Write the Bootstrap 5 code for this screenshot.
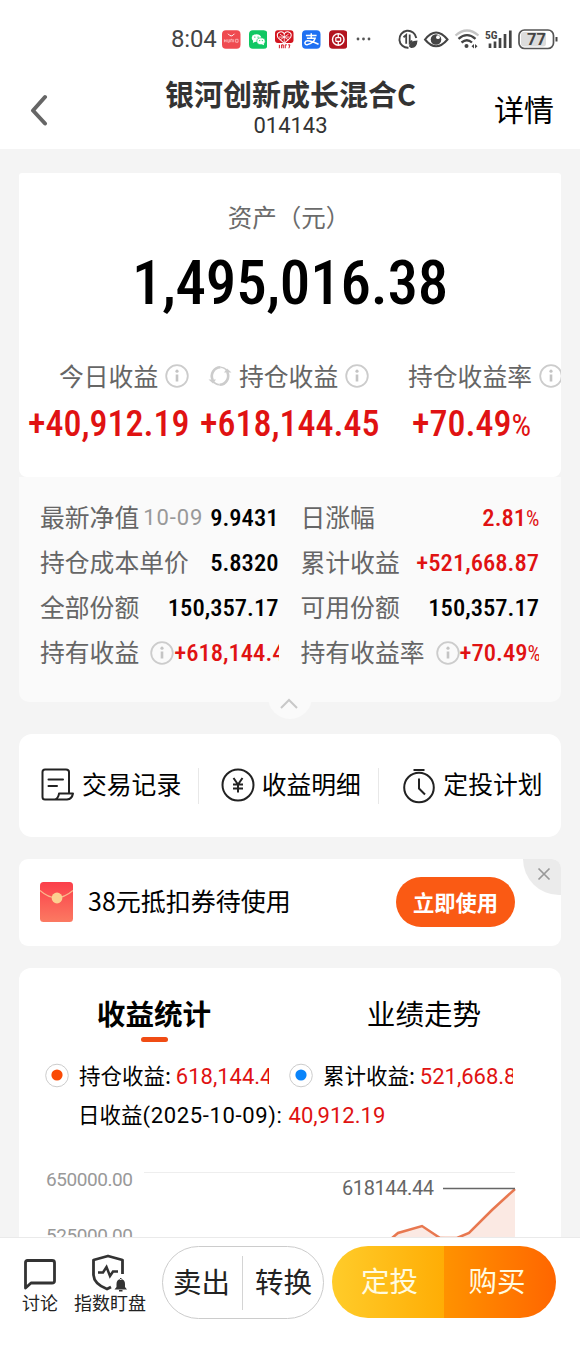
<!DOCTYPE html>
<html lang="zh-CN">
<head>
<meta charset="utf-8">
<meta name="viewport" content="width=device-width, initial-scale=1">
<title>银河创新成长混合C</title>
<link href="https://cdn.jsdelivr.net/npm/bootstrap@5.3.0/dist/css/bootstrap.min.css" rel="stylesheet">
<style>
body{font-family:"Noto Sans CJK SC",sans-serif;color:#000;background:#f4f4f4}
.screen{width:580px;height:1350px}
.lh1{line-height:1}
.num{font-family:"Roboto Condensed",Roboto,sans-serif;font-weight:500}
.rob{font-family:Roboto,"Noto Sans CJK SC",sans-serif}
.up{color:#e01212}
.pct{font-size:.86em;font-weight:400;letter-spacing:-.5px}
svg{display:block;flex:none}
.statusbar{height:60px;padding:18px 22px 0 171px}
.clock{font-size:24px;color:#444;width:51px;font-weight:400;line-height:44px;letter-spacing:-.2px}
.apps{gap:8.2px}
.topnav{height:89px;padding:0 26px 0 30px}
.fund-name{font-size:29px;font-weight:700;color:#333;line-height:32px;margin:17px 3px 0 0}
.fund-code{font-size:22px;color:#333;line-height:24px;margin:5px 3px 0 0}
.detail-link{font-size:30px}
.page{padding:24px 19px 0}
.asset{height:304px;border-radius:3px 3px 8px 8px}
.asset-title{font-size:24.5px;color:#6b6b6b;padding:31px 2px 0 0;line-height:26px}
.asset-total{font-size:61px;line-height:60px;margin-top:23px;letter-spacing:-.2px}
.metric-label{font-size:24.8px;line-height:30px;color:#666}
.metric-label svg{position:relative;top:1px}
.metric-value{font-size:36px;line-height:40px;margin-top:14px}
.details{height:225px;background:#fafafa;border-radius:0 0 10px 10px;padding:18px 22px 0 21px}
.drow{height:45px}
.dcell{width:238.5px;font-size:24.8px;color:#666}
.dcell>span:first-child{padding-bottom:2.5px}
.dcell .num{font-size:24.6px;color:#000;padding-top:2px}
.dcell .num.up{color:#e01212}
.nav-date{font-size:22px;color:#999;letter-spacing:.9px;margin-left:4px}
.tab-up{width:44px;height:44px;left:249px;bottom:-17px;background:#fafafa}
.panel-gap{margin-top:32px}
.links{height:103px;border-radius:13px;font-size:24.8px}
.links .item{width:181px;padding-left:22px;gap:7px}
.links span{padding-bottom:4px}
.vline{width:1px;background:#e8e8e8}
.coupon{height:87px;border-radius:9px;margin-top:22px;padding:0 46px 0 21px}
.coupon-text{font-size:25px;margin-left:15px;padding-bottom:4px}
.use-btn{width:119px;height:50px;background:#fa5a14;font-size:21.3px;font-weight:700;color:#fff;margin-bottom:2px}
.corner{width:38px;height:36px;right:0;top:0;background:#ebebeb;border-bottom-left-radius:36px;border-top-right-radius:9px}
.stats{height:420px;border-radius:12px;margin-top:22px}
.stats .tabs{font-size:28.6px;height:69px;padding:31px 2px 0 0}
.legend-row{height:39px;font-size:21.5px}
.legend-row .rob{font-size:22px}
.clip-l{width:189.5px}
.bottombar{height:113px;border-top:1px solid #eaeaea;padding:8px 23px 0 22px}
.mini{font-size:18px;color:#222}
.pill{height:73px;font-size:28.5px}
.pill-out{width:162px;border:1px solid #ccc;color:#222;margin-left:16px;padding:0 11px 0 10px}
.pill-out span{padding-bottom:3px}
.pill-main{width:224px;margin-left:8px;color:#fffbe0;height:72px}
.buy-l{background:linear-gradient(90deg,#ffcc2a,#ffad05);padding-left:3px}
.buy-r{background:linear-gradient(90deg,#ff9200,#ff6600);padding-right:6px}
</style>
</head>
<body>
<svg width="0" height="0" class="position-absolute">
  <symbol id="info" viewBox="0 0 24 24"><circle cx="12" cy="12" r="10.800" fill="none" stroke="#ccc" stroke-width="1.800"/><path d="M12 10.500V17.500" stroke="#c4c4c4" stroke-width="2.600"/><circle cx="12" cy="7.200" r="1.600" fill="#c4c4c4"/></symbol>
</svg>
<div class="screen d-flex flex-column overflow-hidden">
  <header class="bg-white">
    <div class="statusbar d-flex align-items-center">
      <span class="clock rob">8:04</span>
      <div class="apps d-flex align-items-center">
        <svg width="18.500" height="19" viewBox="0 0 19 19"><rect width="19" height="19" rx="4" fill="#ef4a50"/><path d="M6.200 3.600q3.300 4.400 6.600 0" fill="none" stroke="#fff" stroke-width="1"/><path d="M2.500 9.300v3M4.300 9.300v3M2.500 10.800h1.800M6 9.300v3h1.500v-3M9 12.300v-3h1.500v3M12 9.300v3M14 9.300v3h2.500v-3z" stroke="#ffd5d5" stroke-width=".7" fill="none"/></svg>
        <svg width="18.500" height="19" viewBox="0 0 19 19"><rect width="19" height="19" rx="4" fill="#10c763"/><ellipse cx="7.700" cy="8" rx="4.900" ry="4" fill="#fff"/><path d="M4.500 10l-.6 3 3-1.400z" fill="#fff"/><ellipse cx="12.300" cy="11.300" rx="4.300" ry="3.500" fill="#fff" stroke="#10c763" stroke-width=".7"/><path d="M13 14l2.500 1.400-.4-2z" fill="#fff"/><g fill="#10c763"><circle cx="6" cy="7" r=".7"/><circle cx="9.300" cy="7" r=".7"/><circle cx="11" cy="10.600" r=".6"/><circle cx="13.700" cy="10.600" r=".6"/></g></svg>
        <svg width="18.500" height="19" viewBox="0 0 19 19"><rect y="0" width="19" height="13" rx="3" fill="#d3141f"/><path d="M9.500 13.500L3 7.500Q1 3 5 1.800 8 1 9.500 3.500 11 1 14 1.800 18 3 16 7.500z" fill="#d3141f" stroke="#fff" stroke-width="1.100"/><path d="M5 4l9 6M14 4l-9 6M9.500 3.500v9M4 7h11" stroke="#fff" stroke-width=".8"/><path d="M4.500 15v3.500M6.800 18.500V15h1.700v3.500M10.500 18.500V15h1.700M13.500 15h1.800l-1 3.500" stroke="#d3141f" stroke-width="1" fill="none"/></svg>
        <svg width="18.500" height="19" viewBox="0 0 19 19"><rect width="19" height="19" rx="4" fill="#1f70f2"/><path d="M4 5.400h11M9.500 3v5M5 8.200h8.500Q12 13 5.500 14.800 2.800 15 3 12.600 4 10 8 11q4 1 9 3.400" fill="none" stroke="#fff" stroke-width="1.500"/></svg>
        <svg width="18.500" height="19" viewBox="0 0 19 19"><rect width="19" height="19" rx="4" fill="#b3141f"/><circle cx="9.500" cy="9.500" r="5.900" fill="none" stroke="#fff" stroke-width="1.500"/><rect x="7" y="7.500" width="5" height="4" rx=".8" fill="none" stroke="#fff" stroke-width="1.300"/><path d="M9.500 3.800v3.700M9.500 11.500v3.700" stroke="#fff" stroke-width="1.300"/></svg>
        <svg width="17" height="6" viewBox="0 0 17 6" fill="#555"><circle cx="3" cy="3" r="1.400"/><circle cx="8.500" cy="3" r="1.400"/><circle cx="14" cy="3" r="1.400"/></svg>
      </div>
      <div class="d-flex align-items-center ms-auto">
        <svg width="160" height="24" viewBox="398 27 160 24" fill="none" stroke="#444">
          <path d="M416.300 38A8.500 8.500 0 1 0 408.500 47.700" stroke-width="1.900"/><path d="M403.500 37.300l2.700-2.300v8.800M409.700 34.500V43l2.600-2.300" stroke-width="1.800"/><path d="M409 46.500q0-5.500 8.500-6-.5 8-6.500 7.500z" fill="#444" stroke="none"/>
          <path d="M425 39.500Q436 25.500 447.500 39.500 436 53 425 39.500z" stroke-width="2"/><circle cx="436" cy="39.500" r="5.300" fill="#444" stroke="none"/><circle cx="438" cy="37.200" r="1.900" fill="#fff" stroke="none"/>
          <path d="M455.500 35.500Q467 25.500 478.500 35.500" stroke="#c4c4c4" stroke-width="2.200"/><path d="M458.500 38.800Q467 31.500 475.500 38.800M461.500 42.500Q467 38 472 42.500" stroke-width="2.300"/><circle cx="466.500" cy="46" r="2" fill="#444" stroke="none"/><path d="M471.500 46.200l2.500-2.200v4.400zM477.500 46.200L475 44v4.400z" fill="#444" stroke="none"/>
          <path d="M490 43.500V48M495 41.500V48M500 38V48M505 34V48M510.300 30.500V48" stroke-width="2.700"/>
          <text x="485" y="38.500" font-size="11.500" font-weight="700" font-family="Roboto Condensed" fill="#444" stroke="none">5G</text>
          <rect x="519" y="30" width="34.500" height="18.500" rx="5.500" stroke="#555" stroke-width="1.700"/><rect x="521" y="32" width="25" height="14.500" rx="3" fill="#dcdcdc" stroke="none"/><path d="M556.500 37v4.500" stroke-width="2"/>
          <text x="527" y="45" font-size="16.500" font-weight="700" font-family="Roboto" fill="#444" stroke="none">77</text>
        </svg>
      </div>
    </div>
    <div class="topnav d-flex align-items-start justify-content-between">
      <svg width="60" height="32" viewBox="0 0 60 32" style="margin-top:34px"><path d="M15 3L3 16.500 15 29.500" fill="none" stroke="#666" stroke-width="4" stroke-linecap="round" stroke-linejoin="round"/></svg>
      <div class="text-center">
        <div class="fund-name">银河创新成长混合C</div>
        <div class="fund-code rob">014143</div>
      </div>
      <div class="detail-link" style="line-height:97px">详情</div>
    </div>
  </header>

  <main class="page flex-grow-1 overflow-hidden">
    <section class="position-relative">
      <div class="asset bg-white overflow-hidden">
        <div class="asset-title text-center">资产（元）</div>
        <div class="asset-total num text-center">1,495,016.38</div>
        <div class="d-flex flex-nowrap" style="margin-top:47px">
          <div style="width:181px;padding-left:9px;flex:none">
            <div class="metric-label d-flex align-items-center" style="padding-left:31px">今日收益<svg width="24" height="24" style="margin-left:7px"><use href="#info"/></svg></div>
            <div class="metric-value num up">+40,912.19</div>
          </div>
          <div style="width:212px;flex:none">
            <div class="metric-label d-flex align-items-center" style="padding-left:7px"><svg width="26" height="24" viewBox="0 0 26 24" fill="none" stroke="#ccc" stroke-width="2.600"><path d="M5.800 16A8.800 8.800 0 0 1 13.500 3.200M20.200 8A8.800 8.800 0 0 1 12.500 20.800"/><path d="M13.500 3.200Q18 3.500 20.500 7.500M12.500 20.800Q8 20.500 5.500 16.500" stroke-width="1.600"/><path d="M1.500 15.500h7.500l-3 4zM24.500 8.500H17l3-4z" fill="#ccc" stroke="none"/></svg><span style="margin-left:6px">持仓收益</span><svg width="24" height="24" style="margin-left:7px"><use href="#info"/></svg></div>
            <div class="metric-value num up">+618,144.45</div>
          </div>
          <div style="flex:none">
            <div class="metric-label d-flex align-items-center" style="margin-left:-4px">持仓收益率<svg width="24" height="24" style="margin-left:7px"><use href="#info"/></svg></div>
            <div class="metric-value num up">+70.49<span class="pct">%</span></div>
          </div>
        </div>
      </div>
      <div class="details">
        <div class="drow d-flex justify-content-between">
          <div class="dcell d-flex align-items-center"><span>最新净值</span><span class="nav-date rob">10-09</span><span class="num ms-auto">9.9431</span></div>
          <div class="dcell d-flex align-items-center"><span>日涨幅</span><span class="num up ms-auto">2.81<span class="pct">%</span></span></div>
        </div>
        <div class="drow d-flex justify-content-between">
          <div class="dcell d-flex align-items-center"><span>持仓成本单价</span><span class="num ms-auto">5.8320</span></div>
          <div class="dcell d-flex align-items-center"><span>累计收益</span><span class="num up ms-auto">+521,668.87</span></div>
        </div>
        <div class="drow d-flex justify-content-between">
          <div class="dcell d-flex align-items-center"><span>全部份额</span><span class="num ms-auto">150,357.17</span></div>
          <div class="dcell d-flex align-items-center"><span>可用份额</span><span class="num ms-auto">150,357.17</span></div>
        </div>
        <div class="drow d-flex justify-content-between">
          <div class="dcell d-flex align-items-center overflow-hidden text-nowrap"><span>持有收益</span><svg width="24" height="24" style="margin-left:11px"><use href="#info"/></svg><span class="num up">+618,144.45</span></div>
          <div class="dcell d-flex align-items-center overflow-hidden text-nowrap"><span>持有收益率</span><svg width="24" height="24" style="margin-left:11px"><use href="#info"/></svg><span class="num up">+70.49<span class="pct">%</span></span></div>
        </div>
      </div>
      <div class="tab-up rounded-circle position-absolute d-flex justify-content-center align-items-center"><svg width="20" height="12" viewBox="0 0 20 12" style="margin:14px 2px 0 0"><path d="M2 10l8-8 8 8" fill="none" stroke="#c8c8c8" stroke-width="2"/></svg></div>
    </section>

    <section class="links panel-gap bg-white d-flex align-items-center">
      <div class="item d-flex align-items-center">
        <svg width="34" height="34" viewBox="0 0 34 34" fill="none" stroke="#222" stroke-width="2" stroke-linejoin="round" stroke-linecap="round" style="margin-bottom:2px"><path d="M14 31.500H4Q1.500 31.500 1.500 29V4Q1.500 1.500 4 1.500H25Q28 1.500 28 4V25M14 31.500H26Q31 31 32 25.500H18Q17.500 30 14 31.500zM7.500 11.500H22M7.500 18H16"/></svg><span>交易记录</span>
      </div>
      <div class="vline" style="height:36px;margin-left:-2px;margin-right:1px"></div>
      <div class="item d-flex align-items-center">
        <svg width="34" height="34" viewBox="0 0 34 34" fill="none" stroke="#222" stroke-width="2" style="margin:0 0 2px -1px"><circle cx="17" cy="17" r="15.500"/><path d="M12.500 10l4.500 6.500 4.500-6.500M17 16.500V24.500M12 16.500h10M12 20.500h10"/></svg><span>收益明细</span>
      </div>
      <div class="vline" style="height:36px;margin-left:-2px;margin-right:1px"></div>
      <div class="item d-flex align-items-center">
        <svg width="34" height="36" viewBox="0 0 34 36" fill="none" stroke="#222" stroke-width="2"><circle cx="17" cy="19.500" r="14.800"/><path d="M11.500 2H22.500M17 10.500V20.500l6 6"/></svg><span>定投计划</span>
      </div>
    </section>

    <section class="coupon bg-white d-flex align-items-center position-relative">
      <svg width="33" height="40" viewBox="0 0 33 40" style="margin-bottom:2px"><defs><linearGradient id="env" x1="0" y1="0" x2="0" y2="1"><stop offset="0" stop-color="#fb3f4a"/><stop offset="1" stop-color="#fb7a62"/></linearGradient></defs><rect width="33" height="40" rx="3.500" fill="url(#env)"/><path d="M0 8.500Q16 23 33 8.500" fill="none" stroke="#fbb98c" stroke-width="1.200"/><circle cx="17" cy="16" r="5.400" fill="#fcd090"/></svg>
      <span class="coupon-text">38元抵扣券待使用</span>
      <button class="use-btn btn rounded-pill border-0 p-0 ms-auto" style="line-height:48px">立即使用</button>
      <div class="corner position-absolute d-flex"><svg width="14" height="14" viewBox="0 0 14 14" style="margin:8px 0 0 14px"><path d="M1.500 1.500l11 11M12.500 1.500l-11 11" stroke="#999" stroke-width="1.700"/></svg></div>
    </section>

    <section class="stats bg-white">
      <div class="tabs d-flex text-center lh1">
        <div class="w-50 fw-bold">收益统计</div>
        <div class="w-50">业绩走势</div>
      </div>
      <div style="margin-left:121.500px;width:27px;height:5px;border-radius:3px;background:#f04c14"></div>
      <div class="legend-row d-flex align-items-center" style="padding-left:26px;margin-top:14px">
        <svg width="24" height="25" viewBox="0 0 24 25"><circle cx="12" cy="12.500" r="11.300" fill="#fff" stroke="#ccc"/><circle cx="12" cy="12" r="5.600" fill="#fa4a05"/></svg>
        <div class="clip-l d-flex align-items-center overflow-hidden text-nowrap" style="margin-left:10px"><span>持仓收益:&nbsp;</span><span class="rob up" style="padding-top:2px">618,144.45</span></div>
        <svg width="24" height="25" viewBox="0 0 24 25" style="margin-left:20.500px"><circle cx="12" cy="12.500" r="11.300" fill="#fff" stroke="#ccc"/><circle cx="12" cy="12" r="5.600" fill="#0a84fa"/></svg>
        <div class="clip-l d-flex align-items-center overflow-hidden text-nowrap" style="margin-left:10px"><span>累计收益:&nbsp;</span><span class="rob up" style="padding-top:2px">521,668.87</span></div>
      </div>
      <div class="legend-row d-flex align-items-center" style="padding-left:59px"><span>日收益</span><span class="rob" style="letter-spacing:.65px;padding-top:1px">(2025-10-09):</span><span class="rob up" style="margin-left:6px;padding-top:1px">40,912.19</span></div>
      <svg width="542" height="120" viewBox="19 1134 542 120" font-family="Roboto">
        <path d="M144 1172.500H515" stroke="#eee"/>
        <path d="M392 1238L398 1233 422 1226 440 1236.500 457 1238 469 1233 515 1189V1254H392z" fill="#fbe9e3"/>
        <path d="M386 1243L398 1233 422 1226 440 1238 457 1238 469 1233 492 1210 515 1189" fill="none" stroke="#e87850" stroke-width="2.500"/>
        <path d="M443 1188.500H515" stroke="#666" stroke-width="1.600"/>
        <g font-size="19" fill="#999"><text x="46" y="1186" textLength="87">650000.00</text><text x="46" y="1242" textLength="87">525000.00</text></g>
        <text x="342" y="1195" font-size="20" fill="#666" textLength="92">618144.44</text>
      </svg>
    </section>
  </main>

  <footer class="bottombar bg-white d-flex flex-shrink-0 text-nowrap">
    <div class="mini d-flex flex-column align-items-center">
      <svg width="34" height="36" viewBox="0 0 34 36" style="margin-top:10px"><path d="M2.500 32V6.500Q2.500 4.500 4.500 4.500H29Q31.500 4.500 31.500 6.500V25Q31.500 27 29 27H8z" fill="none" stroke="#333" stroke-width="2.800" stroke-linejoin="round"/></svg>
      <span class="lh1 mt-0" style="padding-top:1px">讨论</span>
    </div>
    <div class="mini d-flex flex-column align-items-center" style="margin-left:16px">
      <svg width="38" height="40" viewBox="92 1253 38 40" fill="none" stroke="#333" stroke-width="2.800" style="margin-top:6px"><path d="M123.500 1275V1261L109 1257 94.500 1261V1276Q95 1285 108 1290L112 1288" stroke-linejoin="round"/><path d="M99 1273.500h5l3.500-5.500 3.500 9 3-4.500h5" stroke-width="2.500"/><path d="M115.500 1290.500h12.500l-2-2.500V1285Q126 1280.500 121.800 1280 117.500 1280.500 117.500 1285V1288zM121 1279h1.500v2H121zM120 1291h3.500v1.500h-3.500z" fill="#333" stroke="none"/></svg>
      <span class="lh1" style="padding-top:1px">指数盯盘</span>
    </div>
    <div class="pill pill-out rounded-pill d-flex align-items-center justify-content-between">
      <span>卖出</span><div class="vline" style="height:54px;background:#d4d4d4"></div><span>转换</span>
    </div>
    <div class="pill pill-main rounded-pill d-flex overflow-hidden text-center" style="line-height:68px">
      <div class="buy-l w-50">定投</div><div class="buy-r w-50">购买</div>
    </div>
  </footer>
</div>
<script src="https://cdn.jsdelivr.net/npm/bootstrap@5.3.0/dist/js/bootstrap.bundle.min.js"></script>
</body>
</html>
